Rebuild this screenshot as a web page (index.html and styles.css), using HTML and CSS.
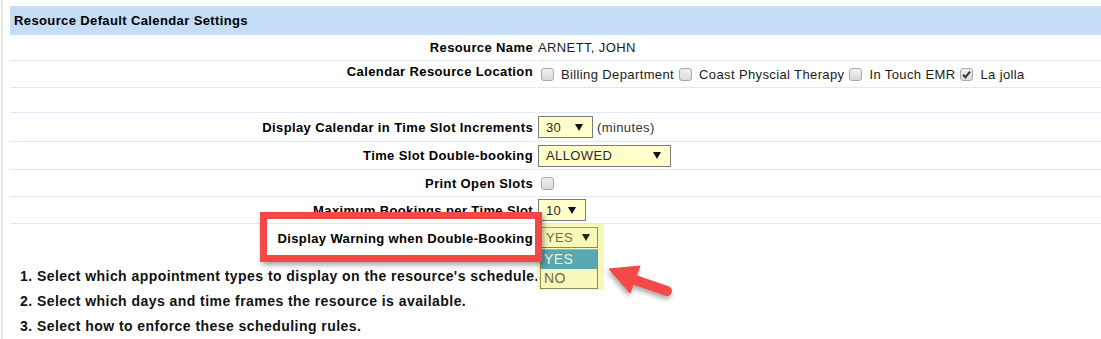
FILE: index.html
```html
<!DOCTYPE html>
<html>
<head>
<meta charset="utf-8">
<link rel="stylesheet" href="styles.css">
</head>
<body>
<div class="page">
  <div class="settings">
    <div class="head">Resource Default Calendar Settings</div>

    <div class="lab r1">Resource Name</div>
    <div class="val r1">ARNETT, JOHN</div>

    <div class="lab r2 top">Calendar Resource Location</div>
    <div class="val r2">
      <span class="cb"></span><span class="cbl">Billing Department</span>
      <span class="cb"></span><span class="cbl">Coast Physcial Therapy</span>
      <span class="cb"></span><span class="cbl">In Touch EMR</span>
      <span class="cb on"><svg viewBox="0 0 13 13" width="13" height="13"><path d="M3 6.8 L5.4 9.2 L10 3.6" fill="none" stroke="#333" stroke-width="2"/></svg></span><span class="cbl">La jolla</span>
    </div>

    <div class="lab r3"></div>
    <div class="val r3"></div>

    <div class="lab r4">Display Calendar in Time Slot Increments</div>
    <div class="val r4">
      <div class="sel w30"><span>30</span><svg class="tri" viewBox="0 0 8 7" width="8" height="7"><path d="M0 0H8L4 7Z" fill="#111"/></svg></div>
      <span class="unit">(minutes)</span>
    </div>

    <div class="lab r5">Time Slot Double-booking</div>
    <div class="val r5">
      <div class="sel wall"><span>ALLOWED</span><svg class="tri" viewBox="0 0 8 7" width="8" height="7"><path d="M0 0H8L4 7Z" fill="#111"/></svg></div>
    </div>

    <div class="lab r6">Print Open Slots</div>
    <div class="val r6"><span class="cb"></span></div>

    <div class="lab r7">Maximum Bookings per Time Slot</div>
    <div class="val r7">
      <div class="sel w10"><span>10</span><svg class="tri" viewBox="0 0 8 7" width="8" height="7"><path d="M0 0H8L4 7Z" fill="#111"/></svg></div>
    </div>

    <div class="lab r8 nob">Display Warning when Double-Booking</div>
    <div class="val r8 nob">
      <div class="glow"></div>
      <div class="sel wyes open"><span>YES</span><svg class="tri" viewBox="0 0 8 7" width="8" height="7"><path d="M0 0H8L4 7Z" fill="#222"/></svg>
        <div class="list">
          <div class="opt hi">YES</div>
          <div class="opt">NO</div>
        </div>
      </div>
    </div>
  </div>

  <div class="steps">
    <div>1. Select which appointment types to display on the resource's schedule.</div>
    <div>2. Select which days and time frames the resource is available.</div>
    <div>3. Select how to enforce these scheduling rules.</div>
  </div>

  <div class="callout"></div>
  <svg class="arrow" viewBox="0 0 90 50" width="90" height="50">
    <defs>
      <filter id="sh" x="-30%" y="-30%" width="160%" height="160%">
        <feDropShadow dx="-1" dy="3" stdDeviation="2.5" flood-color="#000" flood-opacity="0.35"/>
      </filter>
    </defs>
    <g filter="url(#sh)" fill="#f44848" stroke="#f44848">
      <line x1="32" y1="24" x2="67" y2="36" stroke-width="10" stroke-linecap="round"/>
      <polygon points="9,14 40,11 30,38" stroke-width="1" stroke-linejoin="round"/>
    </g>
  </svg>
</div>
</body>
</html>
```

FILE: styles.css
```css
html, body {
  margin: 0;
  padding: 0;
  background: #fff;
}
body {
  font-family: "Liberation Sans", Arial, sans-serif;
  font-size: 13px;
  letter-spacing: 0.38px;
  color: #000;
  overflow: hidden;
}
.page {
  position: relative;
  margin-left: 1px;
  border-left: 2px solid #e8e8e8;
  padding: 6px 0 0 7px;
  height: 333px;
}
.settings {
  display: grid;
  grid-template-columns: 525px 1fr;
  grid-template-rows: 29px 26px 27px 25px 29px 28px 27px 27px 28px;
  column-gap: 3px;
  width: 1095px;
}
.head {
  grid-column: 1 / -1;
  background: #c5ddf6;
  font-weight: bold;
  line-height: 29px;
  padding-left: 4px;
}
.lab, .val {
  display: flex;
  align-items: center;
  border-bottom: 1px solid #dde9f7;
  box-sizing: border-box;
}
.nob { border-bottom: none; }
.lab {
  justify-content: flex-end;
  padding-right: 2px;
  font-weight: bold;
  white-space: nowrap;
}
.lab.top {
  align-items: flex-start;
  padding-top: 3px;
}
.val {
  color: #1a1a1a;
  position: relative;
}
.cb {
  display: inline-block;
  width: 13px;
  height: 13px;
  box-sizing: border-box;
  border: 1px solid #a9a9a9;
  border-radius: 3px;
  background: linear-gradient(#f0f0f0, #dadada);
  margin: 0 4px 0 3px;
  flex: none;
}
.cb svg { display: block; margin: -1px; }
.cbl { margin-right: 2px; margin-left: 3px; }
.sel {
  position: relative;
  box-sizing: border-box;
  height: 22px;
  border: 1px solid #7b7b7b;
  background: #ffffcc;
  display: flex;
  align-items: center;
  justify-content: space-between;
  padding: 0 9px 0 7px;
  color: #2a2a2a;
  font-size: 13px;
}
.tri { display: block; }
.w30 { width: 55px; }
.wall { width: 133px; }
.w10 { width: 48px; }
.unit { margin-left: 4px; color: #333; }
.wyes {
  width: 58px;
  height: 21px;
  margin-left: 2px;
  margin-top: -1px;
  padding: 0 7px 0 5px;
  background: #f8f8b8;
  border-color: #7aa0c8 #8a8a60 #8a8a60 #8a8a60;
  color: #6e6e3a;
  z-index: 2;
}
.glow {
  position: absolute;
  left: -1px;
  top: 0;
  width: 67px;
  height: 66px;
  background: #f8f8bb;
}
.list {
  position: absolute;
  left: -1px;
  top: 21px;
  width: 58px;
  box-sizing: border-box;
  border: 1px solid #8a8a5a;
  border-top: 1px solid #b7b78a;
  background: #f8f8bb;
  padding-bottom: 1px;
}
.opt {
  height: 18px;
  line-height: 18px;
  padding-left: 3px;
  color: #6e6e3a;
  font-size: 14px;
}
.opt.hi {
  background: #58a7b3;
  color: #eef6c8;
  height: 19px;
}
.steps {
  margin-top: 12px;
  padding-left: 10px;
  font-weight: bold;
  font-size: 14px;
  letter-spacing: 0.45px;
  line-height: 25px;
  color: #111;
}
.callout {
  position: absolute;
  left: 257px;
  top: 212px;
  width: 282px;
  height: 50px;
  box-sizing: border-box;
  border: 7px solid #f44848;
  box-shadow: 2px 3px 5px rgba(0,0,0,0.35);
  z-index: 3;
}
.arrow {
  position: absolute;
  left: 597px;
  top: 255px;
  z-index: 3;
}
```
